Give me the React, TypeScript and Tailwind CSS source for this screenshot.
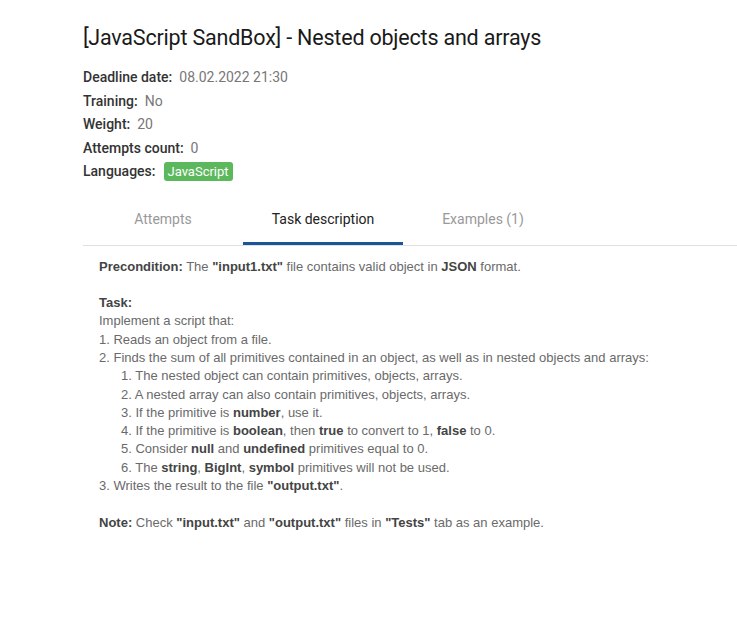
import React from "react";

const B = ({ children }: { children: React.ReactNode }) => (
  <b className="font-bold text-[#444]">{children}</b>
);

export default function App() {
  return (
    <div className="min-h-[629px] w-[737px] bg-white">
      <div className="pl-[83px] pt-[24px] font-['Roboto',sans-serif]">
        <h1 className="text-[21.5px] leading-[28px] text-[#1a1a1a] tracking-[-0.2px]">
          [JavaScript SandBox] - Nested objects and arrays
        </h1>
        <div className="mt-[14px] flex flex-col text-[14px] leading-[23.5px]">
          <div>
            <span className="font-medium text-[#333]">Deadline date:</span>
            <span className="ml-[7px] text-[#777]">08.02.2022 21:30</span>
          </div>
          <div>
            <span className="font-medium text-[#333]">Training:</span>
            <span className="ml-[7px] text-[#777]">No</span>
          </div>
          <div>
            <span className="font-medium text-[#333]">Weight:</span>
            <span className="ml-[7px] text-[#777]">20</span>
          </div>
          <div>
            <span className="font-medium text-[#333]">Attempts count:</span>
            <span className="ml-[7px] text-[#777]">0</span>
          </div>
          <div className="flex items-center">
            <span className="font-medium text-[#333]">Languages:</span>
            <span className="ml-[8px] rounded-[3px] bg-[#5cb85c] px-[4px] text-[13px] leading-[19px] text-white">
              JavaScript
            </span>
          </div>
        </div>
        <div className="mt-[25px] flex border-b border-[#e0e0e0] text-[14px]">
          <div className="w-[160px] pb-[15px] text-center text-[#999]">Attempts</div>
          <div className="relative w-[160px] pb-[15px] text-center text-[#222]">
            Task description
            <div className="absolute bottom-[0px] left-0 right-0 h-[3px] bg-[#1c5597]" />
          </div>
          <div className="w-[160px] pb-[15px] text-center text-[#999]">Examples (1)</div>
        </div>
      </div>
      <div className="pl-[99px] pt-[12px] font-['Liberation_Sans',Arial,sans-serif] text-[13px] leading-[18.3px] text-[#6a6a6a]">
        <div>
          <B>Precondition:</B> The <B>"input1.txt"</B> file contains valid object in <B>JSON</B> format.
        </div>
        <div className="h-[18.3px]" />
        <div>
          <B>Task:</B>
        </div>
        <div>Implement a script that:</div>
        <div>1. Reads an object from a file.</div>
        <div>2. Finds the sum of all primitives contained in an object, as well as in nested objects and arrays:</div>
        <div className="pl-[22px]">
          <div>1. The nested object can contain primitives, objects, arrays.</div>
          <div>2. A nested array can also contain primitives, objects, arrays.</div>
          <div>
            3. If the primitive is <B>number</B>, use it.
          </div>
          <div>
            4. If the primitive is <B>boolean</B>, then <B>true</B> to convert to 1, <B>false</B> to 0.
          </div>
          <div>
            5. Consider <B>null</B> and <B>undefined</B> primitives equal to 0.
          </div>
          <div>
            6. The <B>string</B>, <B>BigInt</B>, <B>symbol</B> primitives will not be used.
          </div>
        </div>
        <div>
          3. Writes the result to the file <B>"output.txt"</B>.
        </div>
        <div className="h-[18.3px]" />
        <div>
          <B>Note:</B> Check <B>"input.txt"</B> and <B>"output.txt"</B> files in <B>"Tests"</B> tab as an example.
        </div>
      </div>
    </div>
  );
}
